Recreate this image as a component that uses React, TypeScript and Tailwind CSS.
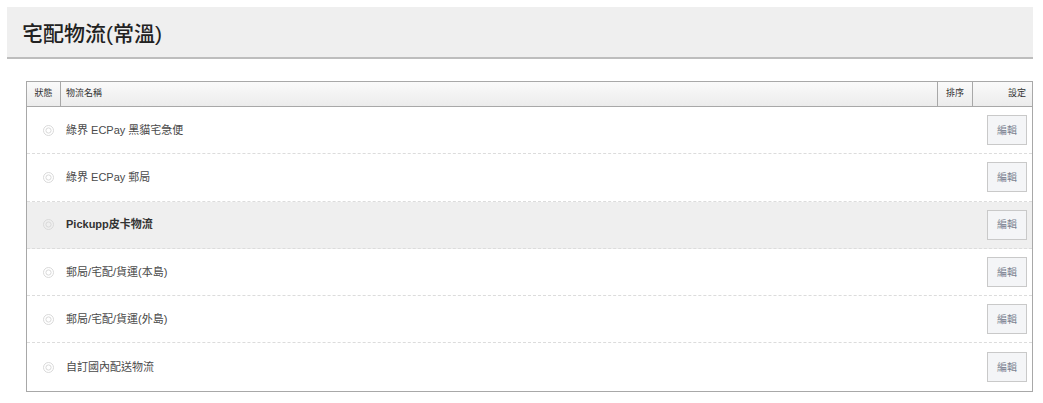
import React from 'react'

const rows = [
  { name: '綠界 ECPay 黑貓宅急便', active: false },
  { name: '綠界 ECPay 郵局', active: false },
  { name: 'Pickupp皮卡物流', active: true },
  { name: '郵局/宅配/貨運(本島)', active: false },
  { name: '郵局/宅配/貨運(外島)', active: false },
  { name: '自訂國內配送物流', active: false },
]

function RadioDot() {
  return (
    <svg width="11" height="11" viewBox="0 0 11 11" className="shrink-0">
      <circle cx="5.5" cy="5.5" r="5" fill="none" stroke="#d9d9d9" strokeWidth="1" />
      <circle cx="5.5" cy="5.5" r="2.6" fill="none" stroke="#d9d9d9" strokeWidth="1" />
    </svg>
  )
}

export default function App() {
  return (
    <div
      className="min-h-[403px] w-[1043px] bg-white pt-[7px] pl-[7px]"
      style={{ fontFamily: '"Liberation Sans", "Noto Sans CJK TC", sans-serif' }}
    >
      {/* Title bar */}
      <div className="flex h-[52px] w-[1026px] items-center border-b-2 border-[#bdbdbd] bg-[#efefef] pl-[15px]">
        <h1 className="pt-[2px] text-[21px] leading-none font-medium text-[#222]">宅配物流(常溫)</h1>
      </div>

      {/* Table */}
      <div className="ml-[19px] mt-[22px] w-[1007px] border border-[#a8a8a8]">
        <div className="flex h-[25px] border-b border-[#a8a8a8] bg-gradient-to-b from-[#fafafa] to-[#ececec] text-[9px] text-[#333]">
          <div className="flex w-[34px] items-center justify-center border-r border-[#a8a8a8]">狀態</div>
          <div className="flex flex-1 items-center pl-[5px]">物流名稱</div>
          <div className="flex w-[35px] items-center justify-center border-l border-[#a8a8a8]">排序</div>
          <div className="flex w-[60px] items-center justify-end border-l border-[#a8a8a8] pr-[6px]">設定</div>
        </div>
        {rows.map((r, i) => (
          <div
            key={r.name}
            className={`flex h-[47.3px] items-center ${i < rows.length - 1 ? 'border-b border-dashed border-[#dcdcdc]' : ''} ${
              r.active ? 'bg-[#efefef]' : 'bg-white'
            }`}
          >
            <div className="flex w-[34px] justify-center pl-[8px]">
              <RadioDot />
            </div>
            <div
              className={`flex-1 pl-[5px] text-[11px] ${r.active ? 'font-bold text-[#333]' : 'text-[#4a4a4a]'}`}
            >
              {r.name}
            </div>
            <div className="flex w-[60px] justify-end pr-[5px]">
              <button className="h-[30px] w-[40px] border border-[#c9c9c9] bg-[#f4f5f7] text-[10px] text-[#7a8290]">
                編輯
              </button>
            </div>
          </div>
        ))}
      </div>
    </div>
  )
}
